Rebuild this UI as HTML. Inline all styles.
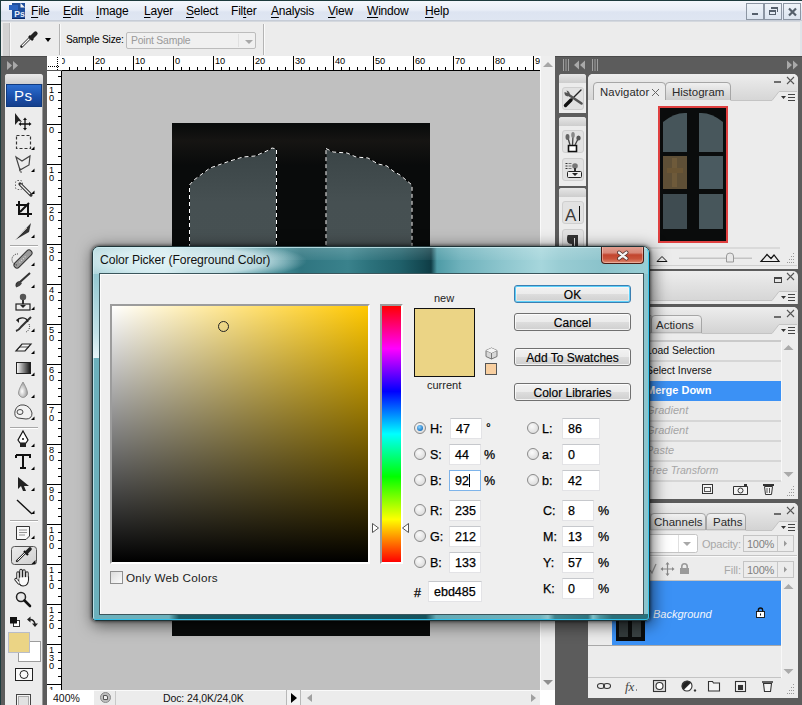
<!DOCTYPE html>
<html><head><meta charset="utf-8">
<style>
*{margin:0;padding:0;box-sizing:border-box}
html,body{width:802px;height:705px;overflow:hidden;background:#c0c0c0;font-family:"Liberation Sans",sans-serif;position:relative}
.a{position:absolute}
.t{position:absolute;white-space:nowrap;color:#000}
#menubar{left:1px;top:1px;width:801px;height:20px;background:linear-gradient(#f4f7fc 0%,#e9eef7 45%,#dde4f1 55%,#dfe6f2 100%)}
#menubar span{position:absolute;top:3px;font-size:12px;letter-spacing:-0.2px;color:#000}
#menubar u{text-decoration:underline;text-underline-offset:1.5px;text-decoration-thickness:1px}
.wc{position:absolute;top:2px;width:18px;height:17px;border:1px solid #8c96a3;background:linear-gradient(#eef3f9,#dce5f0)}
#opts{left:1px;top:21px;width:801px;height:35px;background:#ececec;border-top:1px solid #d4d8de}
.tri{position:absolute;width:0;height:0;border-left:4px solid transparent;border-right:4px solid transparent;border-top:4px solid #000}
.panel{position:absolute;background:#ececec;border-radius:5px 5px 0 0}
.sb{position:absolute;background:#ececec}
</style></head><body>
<div class="a" style="left:0;top:0;width:802px;height:705px;background:#c0c0c0"></div>
<!-- menubar -->
<div class="a" id="menubar">
<svg class="a" style="left:7px;top:1px" width="18" height="18" viewBox="0 0 18 18">
<rect x="4" y="1" width="13" height="16" fill="#1f4e9c"/><path d="M12.5 1 L17 5.5 L12.5 5.5Z" fill="#f4f4f4"/><rect x="1" y="3" width="9" height="5" fill="#2a63c0"/>
<rect x="4" y="16" width="13" height="1" fill="#0d2a66"/>
<text x="6.3" y="14.5" font-size="8.5" font-weight="bold" fill="#e8eef8" font-family="Liberation Sans">Ps</text>
</svg>
<span style="left:30px"><u>F</u>ile</span><span style="left:62px"><u>E</u>dit</span><span style="left:95px"><u>I</u>mage</span><span style="left:143px"><u>L</u>ayer</span><span style="left:185px"><u>S</u>elect</span><span style="left:230px">Fil<u>t</u>er</span><span style="left:270px"><u>A</u>nalysis</span><span style="left:327px"><u>V</u>iew</span><span style="left:366px"><u>W</u>indow</span><span style="left:424px"><u>H</u>elp</span>
<div class="wc" style="left:745px"><div class="a" style="left:5px;top:9px;width:6px;height:2px;background:#55606c"></div></div>
<div class="wc" style="left:763px"><div class="a" style="left:4px;top:6px;width:7px;height:5px;border:1.5px solid #55606c;border-top-width:2px"></div><div class="a" style="left:6px;top:3px;width:7px;height:5px;border:1px solid #55606c;border-top-width:2px;border-left:none;border-bottom:none"></div></div>
<div class="wc" style="left:782px"><svg class="a" style="left:3px;top:3px" width="11" height="10"><path d="M2 1.5 L9 8.5 M9 1.5 L2 8.5" stroke="#55606c" stroke-width="2.2"/></svg></div>
</div>
<div class="a" style="left:1px;top:20px;width:801px;height:1px;background:#c6ccd6"></div>
<!-- options bar -->
<div class="a" id="opts">
 <div class="a" style="left:1px;top:1px;width:8px;height:33px;background:#d2d2d2;border-left:1px solid #e6e6e6;border-right:1px solid #bdbdbd"></div>
 <div class="a" style="left:9px;top:1px;width:1px;height:33px;background:#f8f8f8"></div>
 <svg class="a" style="left:18px;top:8px" width="20" height="19" viewBox="0 0 20 19">
  <path d="M2.5 16.5 L11 8" stroke="#222" stroke-width="2.6" stroke-linecap="round"/>
  <path d="M3 16 L10.5 8.5" stroke="#fafafa" stroke-width="1.2"/>
  <path d="M10 6 L14 10" stroke="#111" stroke-width="2.5"/>
  <path d="M12.5 7.5 L16.5 3.5" stroke="#222" stroke-width="4.2" stroke-linecap="round"/>
 </svg>
 <div class="tri" style="left:44px;top:16px;border-width:4px 3.5px 0 3.5px"></div>
 <div class="a" style="left:58px;top:2px;width:1px;height:31px;background:#b4b4b4"></div>
 <div class="a" style="left:59px;top:2px;width:1px;height:31px;background:#fafafa"></div>
 <span class="t" style="left:65px;top:12px;font-size:10.2px;color:#000;letter-spacing:-0.2px">Sample Size:</span>
 <div class="a" style="left:125px;top:10px;width:130px;height:17px;border:1px solid #bcbcbc;background:#f0f0f0;border-radius:2px">
   <span class="t" style="left:4px;top:2px;font-size:10.4px;color:#9a9a9a;letter-spacing:-0.2px">Point Sample</span>
   <div class="a" style="left:111px;top:1px;width:1px;height:13px;background:#e0e0e0"></div>
   <div class="tri" style="left:118px;top:7px;border-width:4px 4px 0 4px;border-top-color:#a8a8a8"></div>
 </div>
 <div class="a" style="left:262px;top:2px;width:1px;height:31px;background:#b4b4b4"></div><div class="a" style="left:263px;top:2px;width:1px;height:31px;background:#fafafa"></div>
 <div class="a" style="left:0;top:34px;width:801px;height:1px;background:#bcbcbc"></div>
</div>
<div class="a" style="left:0;top:0;width:802px;height:1px;background:#1d3b3d"></div>
<div class="a" style="left:0;top:0;width:1px;height:705px;background:#1d3b3d"></div>
<div class="a" style="left:800px;top:21px;width:2px;height:35px;background:#dfe3e8"></div>
<!-- canvas -->
<div class="a" style="left:62px;top:70px;width:478px;height:620px;background:#c0c0c0"></div>
<div class="a" style="left:172px;top:123px;width:258px;height:513px;background:#090b0b;overflow:hidden">
 <div class="a" style="left:0;top:2px;width:258px;height:40px;background:linear-gradient(rgba(48,40,34,0),rgba(48,40,34,.33) 40%,rgba(48,40,34,0))"></div>
 <svg class="a" style="left:0;top:0" width="258" height="513" viewBox="172 123 258 513">
  <defs><linearGradient id="pg" x1="0" y1="0" x2="0" y2="1"><stop offset="0" stop-color="#3a4446"/><stop offset="0.12" stop-color="#465052"/><stop offset="1" stop-color="#4a5454"/></linearGradient></defs>
  <path d="M189.5 185 L194 180 L210 168 L230 161 L243 157 L255 156 L262 153 L269 150 L272 148 L276.5 149 L276.5 600 L189.5 600Z" fill="url(#pg)" stroke="#000" stroke-width="1"/><path d="M189.5 185 L194 180 L210 168 L230 161 L243 157 L255 156 L262 153 L269 150 L272 148 L276.5 149 L276.5 600 L189.5 600Z" fill="none" stroke="#fff" stroke-width="1" stroke-dasharray="4 3"/>
  <path d="M326 148.5 L333 152 L347 153 L356 157 L368 158 L378 164 L387 166 L393 171 L400 175 L412 185 L412 600 L326 600Z" fill="url(#pg)" stroke="#000" stroke-width="1"/><path d="M326 148.5 L333 152 L347 153 L356 157 L368 158 L378 164 L387 166 L393 171 L400 175 L412 185 L412 600 L326 600Z" fill="none" stroke="#fff" stroke-width="1" stroke-dasharray="4 3"/>
 </svg>
</div>
<svg class="a" style="left:47px;top:56px" width="493" height="15" viewBox="47 56 493 15"><rect x="47" y="56" width="493" height="15" fill="#fff"/><rect x="47" y="70" width="493" height="1" fill="#000"/><rect x="53" y="56" width="1" height="15" fill="#000"/><rect x="61" y="67" width="1" height="4" fill="#000"/><rect x="69" y="67" width="1" height="4" fill="#000"/><rect x="77" y="67" width="1" height="4" fill="#000"/><rect x="85" y="67" width="1" height="4" fill="#000"/><text x="55" y="64" font-size="9.2" font-family="Liberation Sans" fill="#000">30</text><rect x="93" y="56" width="1" height="15" fill="#000"/><rect x="101" y="67" width="1" height="4" fill="#000"/><rect x="109" y="67" width="1" height="4" fill="#000"/><rect x="117" y="67" width="1" height="4" fill="#000"/><rect x="125" y="67" width="1" height="4" fill="#000"/><text x="95" y="64" font-size="9.2" font-family="Liberation Sans" fill="#000">20</text><rect x="133" y="56" width="1" height="15" fill="#000"/><rect x="141" y="67" width="1" height="4" fill="#000"/><rect x="149" y="67" width="1" height="4" fill="#000"/><rect x="157" y="67" width="1" height="4" fill="#000"/><rect x="165" y="67" width="1" height="4" fill="#000"/><text x="135" y="64" font-size="9.2" font-family="Liberation Sans" fill="#000">10</text><rect x="173" y="56" width="1" height="15" fill="#000"/><rect x="181" y="67" width="1" height="4" fill="#000"/><rect x="189" y="67" width="1" height="4" fill="#000"/><rect x="197" y="67" width="1" height="4" fill="#000"/><rect x="205" y="67" width="1" height="4" fill="#000"/><text x="175" y="64" font-size="9.2" font-family="Liberation Sans" fill="#000">0</text><rect x="213" y="56" width="1" height="15" fill="#000"/><rect x="221" y="67" width="1" height="4" fill="#000"/><rect x="229" y="67" width="1" height="4" fill="#000"/><rect x="237" y="67" width="1" height="4" fill="#000"/><rect x="245" y="67" width="1" height="4" fill="#000"/><text x="215" y="64" font-size="9.2" font-family="Liberation Sans" fill="#000">10</text><rect x="253" y="56" width="1" height="15" fill="#000"/><rect x="261" y="67" width="1" height="4" fill="#000"/><rect x="269" y="67" width="1" height="4" fill="#000"/><rect x="277" y="67" width="1" height="4" fill="#000"/><rect x="285" y="67" width="1" height="4" fill="#000"/><text x="255" y="64" font-size="9.2" font-family="Liberation Sans" fill="#000">20</text><rect x="293" y="56" width="1" height="15" fill="#000"/><rect x="301" y="67" width="1" height="4" fill="#000"/><rect x="309" y="67" width="1" height="4" fill="#000"/><rect x="317" y="67" width="1" height="4" fill="#000"/><rect x="325" y="67" width="1" height="4" fill="#000"/><text x="295" y="64" font-size="9.2" font-family="Liberation Sans" fill="#000">30</text><rect x="333" y="56" width="1" height="15" fill="#000"/><rect x="341" y="67" width="1" height="4" fill="#000"/><rect x="349" y="67" width="1" height="4" fill="#000"/><rect x="357" y="67" width="1" height="4" fill="#000"/><rect x="365" y="67" width="1" height="4" fill="#000"/><text x="335" y="64" font-size="9.2" font-family="Liberation Sans" fill="#000">40</text><rect x="373" y="56" width="1" height="15" fill="#000"/><rect x="381" y="67" width="1" height="4" fill="#000"/><rect x="389" y="67" width="1" height="4" fill="#000"/><rect x="397" y="67" width="1" height="4" fill="#000"/><rect x="405" y="67" width="1" height="4" fill="#000"/><text x="375" y="64" font-size="9.2" font-family="Liberation Sans" fill="#000">50</text><rect x="413" y="56" width="1" height="15" fill="#000"/><rect x="421" y="67" width="1" height="4" fill="#000"/><rect x="429" y="67" width="1" height="4" fill="#000"/><rect x="437" y="67" width="1" height="4" fill="#000"/><rect x="445" y="67" width="1" height="4" fill="#000"/><text x="415" y="64" font-size="9.2" font-family="Liberation Sans" fill="#000">60</text><rect x="453" y="56" width="1" height="15" fill="#000"/><rect x="461" y="67" width="1" height="4" fill="#000"/><rect x="469" y="67" width="1" height="4" fill="#000"/><rect x="477" y="67" width="1" height="4" fill="#000"/><rect x="485" y="67" width="1" height="4" fill="#000"/><text x="455" y="64" font-size="9.2" font-family="Liberation Sans" fill="#000">70</text><rect x="493" y="56" width="1" height="15" fill="#000"/><rect x="501" y="67" width="1" height="4" fill="#000"/><rect x="509" y="67" width="1" height="4" fill="#000"/><rect x="517" y="67" width="1" height="4" fill="#000"/><rect x="525" y="67" width="1" height="4" fill="#000"/><text x="495" y="64" font-size="9.2" font-family="Liberation Sans" fill="#000">80</text><rect x="533" y="56" width="1" height="15" fill="#000"/><text x="535" y="64" font-size="9.2" font-family="Liberation Sans" fill="#000">90</text><rect x="47" y="56" width="15" height="15" fill="#fff"/><rect x="47" y="70" width="15" height="1" fill="#555"/><line x1="57.5" y1="57" x2="57.5" y2="70" stroke="#000" stroke-width="1" stroke-dasharray="1 1"/><line x1="48" y1="66.5" x2="60" y2="66.5" stroke="#000" stroke-width="1" stroke-dasharray="1 1"/></svg><svg class="a" style="left:47px;top:71px" width="15" height="619" viewBox="47 71 15 619"><rect x="47" y="71" width="15" height="619" fill="#fff"/><rect x="61" y="71" width="1" height="619" fill="#000"/><rect x="47" y="44" width="15" height="1" fill="#000"/><rect x="58" y="76" width="4" height="1" fill="#000"/><text x="49" y="52.5" font-size="9.2" font-family="Liberation Sans" fill="#000">2</text><text x="49" y="60.8" font-size="9.2" font-family="Liberation Sans" fill="#000">0</text><rect x="47" y="84" width="15" height="1" fill="#000"/><rect x="58" y="92" width="4" height="1" fill="#000"/><rect x="58" y="100" width="4" height="1" fill="#000"/><rect x="58" y="108" width="4" height="1" fill="#000"/><rect x="58" y="116" width="4" height="1" fill="#000"/><text x="49" y="92.5" font-size="9.2" font-family="Liberation Sans" fill="#000">1</text><text x="49" y="100.8" font-size="9.2" font-family="Liberation Sans" fill="#000">0</text><rect x="47" y="124" width="15" height="1" fill="#000"/><rect x="58" y="132" width="4" height="1" fill="#000"/><rect x="58" y="140" width="4" height="1" fill="#000"/><rect x="58" y="148" width="4" height="1" fill="#000"/><rect x="58" y="156" width="4" height="1" fill="#000"/><text x="49" y="132.5" font-size="9.2" font-family="Liberation Sans" fill="#000">0</text><rect x="47" y="164" width="15" height="1" fill="#000"/><rect x="58" y="172" width="4" height="1" fill="#000"/><rect x="58" y="180" width="4" height="1" fill="#000"/><rect x="58" y="188" width="4" height="1" fill="#000"/><rect x="58" y="196" width="4" height="1" fill="#000"/><text x="49" y="172.5" font-size="9.2" font-family="Liberation Sans" fill="#000">1</text><text x="49" y="180.8" font-size="9.2" font-family="Liberation Sans" fill="#000">0</text><rect x="47" y="204" width="15" height="1" fill="#000"/><rect x="58" y="212" width="4" height="1" fill="#000"/><rect x="58" y="220" width="4" height="1" fill="#000"/><rect x="58" y="228" width="4" height="1" fill="#000"/><rect x="58" y="236" width="4" height="1" fill="#000"/><text x="49" y="212.5" font-size="9.2" font-family="Liberation Sans" fill="#000">2</text><text x="49" y="220.8" font-size="9.2" font-family="Liberation Sans" fill="#000">0</text><rect x="47" y="244" width="15" height="1" fill="#000"/><rect x="58" y="252" width="4" height="1" fill="#000"/><rect x="58" y="260" width="4" height="1" fill="#000"/><rect x="58" y="268" width="4" height="1" fill="#000"/><rect x="58" y="276" width="4" height="1" fill="#000"/><text x="49" y="252.5" font-size="9.2" font-family="Liberation Sans" fill="#000">3</text><text x="49" y="260.8" font-size="9.2" font-family="Liberation Sans" fill="#000">0</text><rect x="47" y="284" width="15" height="1" fill="#000"/><rect x="58" y="292" width="4" height="1" fill="#000"/><rect x="58" y="300" width="4" height="1" fill="#000"/><rect x="58" y="308" width="4" height="1" fill="#000"/><rect x="58" y="316" width="4" height="1" fill="#000"/><text x="49" y="292.5" font-size="9.2" font-family="Liberation Sans" fill="#000">4</text><text x="49" y="300.8" font-size="9.2" font-family="Liberation Sans" fill="#000">0</text><rect x="47" y="324" width="15" height="1" fill="#000"/><rect x="58" y="332" width="4" height="1" fill="#000"/><rect x="58" y="340" width="4" height="1" fill="#000"/><rect x="58" y="348" width="4" height="1" fill="#000"/><rect x="58" y="356" width="4" height="1" fill="#000"/><text x="49" y="332.5" font-size="9.2" font-family="Liberation Sans" fill="#000">5</text><text x="49" y="340.8" font-size="9.2" font-family="Liberation Sans" fill="#000">0</text><rect x="47" y="364" width="15" height="1" fill="#000"/><rect x="58" y="372" width="4" height="1" fill="#000"/><rect x="58" y="380" width="4" height="1" fill="#000"/><rect x="58" y="388" width="4" height="1" fill="#000"/><rect x="58" y="396" width="4" height="1" fill="#000"/><text x="49" y="372.5" font-size="9.2" font-family="Liberation Sans" fill="#000">6</text><text x="49" y="380.8" font-size="9.2" font-family="Liberation Sans" fill="#000">0</text><rect x="47" y="404" width="15" height="1" fill="#000"/><rect x="58" y="412" width="4" height="1" fill="#000"/><rect x="58" y="420" width="4" height="1" fill="#000"/><rect x="58" y="428" width="4" height="1" fill="#000"/><rect x="58" y="436" width="4" height="1" fill="#000"/><text x="49" y="412.5" font-size="9.2" font-family="Liberation Sans" fill="#000">7</text><text x="49" y="420.8" font-size="9.2" font-family="Liberation Sans" fill="#000">0</text><rect x="47" y="444" width="15" height="1" fill="#000"/><rect x="58" y="452" width="4" height="1" fill="#000"/><rect x="58" y="460" width="4" height="1" fill="#000"/><rect x="58" y="468" width="4" height="1" fill="#000"/><rect x="58" y="476" width="4" height="1" fill="#000"/><text x="49" y="452.5" font-size="9.2" font-family="Liberation Sans" fill="#000">8</text><text x="49" y="460.8" font-size="9.2" font-family="Liberation Sans" fill="#000">0</text><rect x="47" y="484" width="15" height="1" fill="#000"/><rect x="58" y="492" width="4" height="1" fill="#000"/><rect x="58" y="500" width="4" height="1" fill="#000"/><rect x="58" y="508" width="4" height="1" fill="#000"/><rect x="58" y="516" width="4" height="1" fill="#000"/><text x="49" y="492.5" font-size="9.2" font-family="Liberation Sans" fill="#000">9</text><text x="49" y="500.8" font-size="9.2" font-family="Liberation Sans" fill="#000">0</text><rect x="47" y="524" width="15" height="1" fill="#000"/><rect x="58" y="532" width="4" height="1" fill="#000"/><rect x="58" y="540" width="4" height="1" fill="#000"/><rect x="58" y="548" width="4" height="1" fill="#000"/><rect x="58" y="556" width="4" height="1" fill="#000"/><text x="49" y="532.5" font-size="9.2" font-family="Liberation Sans" fill="#000">1</text><text x="49" y="540.8" font-size="9.2" font-family="Liberation Sans" fill="#000">0</text><text x="49" y="549.1" font-size="9.2" font-family="Liberation Sans" fill="#000">0</text><rect x="47" y="564" width="15" height="1" fill="#000"/><rect x="58" y="572" width="4" height="1" fill="#000"/><rect x="58" y="580" width="4" height="1" fill="#000"/><rect x="58" y="588" width="4" height="1" fill="#000"/><rect x="58" y="596" width="4" height="1" fill="#000"/><text x="49" y="572.5" font-size="9.2" font-family="Liberation Sans" fill="#000">1</text><text x="49" y="580.8" font-size="9.2" font-family="Liberation Sans" fill="#000">1</text><text x="49" y="589.1" font-size="9.2" font-family="Liberation Sans" fill="#000">0</text><rect x="47" y="604" width="15" height="1" fill="#000"/><rect x="58" y="612" width="4" height="1" fill="#000"/><rect x="58" y="620" width="4" height="1" fill="#000"/><rect x="58" y="628" width="4" height="1" fill="#000"/><rect x="58" y="636" width="4" height="1" fill="#000"/><text x="49" y="612.5" font-size="9.2" font-family="Liberation Sans" fill="#000">1</text><text x="49" y="620.8" font-size="9.2" font-family="Liberation Sans" fill="#000">2</text><text x="49" y="629.1" font-size="9.2" font-family="Liberation Sans" fill="#000">0</text><rect x="47" y="644" width="15" height="1" fill="#000"/><rect x="58" y="652" width="4" height="1" fill="#000"/><rect x="58" y="660" width="4" height="1" fill="#000"/><rect x="58" y="668" width="4" height="1" fill="#000"/><rect x="58" y="676" width="4" height="1" fill="#000"/><text x="49" y="652.5" font-size="9.2" font-family="Liberation Sans" fill="#000">1</text><text x="49" y="660.8" font-size="9.2" font-family="Liberation Sans" fill="#000">3</text><text x="49" y="669.1" font-size="9.2" font-family="Liberation Sans" fill="#000">0</text><rect x="47" y="684" width="15" height="1" fill="#000"/><text x="49" y="692.5" font-size="9.2" font-family="Liberation Sans" fill="#000">1</text><text x="49" y="700.8" font-size="9.2" font-family="Liberation Sans" fill="#000">4</text><text x="49" y="709.1" font-size="9.2" font-family="Liberation Sans" fill="#000">0</text></svg><!-- vscroll + status -->
<div class="a" style="left:540px;top:56px;width:15px;height:634px;background:#eeeeee;border-left:1px solid #fafafa"></div>
<div class="a" style="left:543px;top:62px;width:0;height:0;border-left:5px solid transparent;border-right:5px solid transparent;border-bottom:5px solid #a6a6a6"></div>
<div class="a" style="left:543px;top:680px;width:0;height:0;border-left:5px solid transparent;border-right:5px solid transparent;border-top:5px solid #8e8e8e"></div>
<div class="a" style="left:540px;top:690px;width:15px;height:15px;background:#fff"></div>
<div class="a" style="left:47px;top:690px;width:493px;height:15px;background:#ececec;border-top:1px solid #fafafa"></div>
<div class="a" style="left:47px;top:690px;width:47px;height:15px;background:#fff"></div>
<span class="t" style="left:53px;top:692px;font-size:10.5px;color:#111">400%</span>
<div class="a" style="left:94px;top:691px;width:22px;height:14px;background:#ebebeb;border-right:1px solid #c8c8c8"></div>
<div class="a" style="left:100px;top:692px;width:11px;height:11px;border-radius:50%;background:#bdbdbd;border:1px solid #8a8a8a"></div>
<div class="a" style="left:103px;top:695px;width:5px;height:5px;background:#f0f0f0;border:1px solid #555;border-radius:0 2px 0 0"></div>
<span class="t" style="left:163px;top:692px;font-size:10.5px;color:#111;letter-spacing:-0.1px">Doc: 24,0K/24,0K</span>
<div class="a" style="left:286px;top:690px;width:15px;height:15px;border-left:1px solid #b8b8b8;border-right:1px solid #b8b8b8;background:#f2f2f2"></div>
<div class="a" style="left:291px;top:693px;width:0;height:0;border-top:5px solid transparent;border-bottom:5px solid transparent;border-left:6px solid #000"></div>
<div class="a" style="left:307px;top:694px;width:0;height:0;border-top:4px solid transparent;border-bottom:4px solid transparent;border-right:5px solid #a0a0a0"></div>
<div class="a" style="left:531px;top:694px;width:0;height:0;border-top:4px solid transparent;border-bottom:4px solid transparent;border-left:5px solid #a0a0a0"></div>
<!-- toolbox -->
<div class="a" style="left:1px;top:56px;width:46px;height:649px;background:#5c5c5c"></div>
<div class="a" style="left:1px;top:56px;width:46px;height:1px;background:#4a4a4a"></div>
<svg class="a" style="left:7px;top:61px" width="12" height="9"><path d="M0 0 L5 4.5 L0 9Z M6 0 L11 4.5 L6 9Z" fill="#a9a9a9"/></svg>
<div class="a" style="left:5px;top:74px;width:38px;height:631px;background:#ececec;border-radius:3px 3px 0 0;border-right:1px solid #9a9a9a"></div>
<div class="a" style="left:5px;top:74px;width:38px;height:10px;background:linear-gradient(#e9e9e9,#cfcfcf);border-radius:3px 3px 0 0"></div>
<div class="a" style="left:6px;top:84px;width:36px;height:23px;background:linear-gradient(#2d6ed0,#1a4ea8 60%,#163f8c);border:1px solid #0f3a80"></div>
<span class="t" style="left:14px;top:87px;font-size:15px;color:#fff;font-weight:normal;letter-spacing:0.5px">Ps</span>
<svg class="a" style="left:5px;top:108px" width="38" height="600" viewBox="5 108 38 600">
 <g fill="#000" stroke="none">
  <!-- corner triangles --><path d="M34.5 146.5 L34.5 150 L31 150Z"/><path d="M34.5 168.5 L34.5 172 L31 172Z"/><path d="M34.5 190.5 L34.5 194 L31 194Z"/><path d="M34.5 234.5 L34.5 238 L31 238Z"/><path d="M34.5 262.5 L34.5 266 L31 266Z"/><path d="M34.5 284.5 L34.5 288 L31 288Z"/><path d="M34.5 306.5 L34.5 310 L31 310Z"/><path d="M34.5 328.5 L34.5 332 L31 332Z"/><path d="M34.5 350.5 L34.5 354 L31 354Z"/><path d="M34.5 372.5 L34.5 376 L31 376Z"/><path d="M34.5 394.5 L34.5 398 L31 398Z"/><path d="M34.5 416.5 L34.5 420 L31 420Z"/><path d="M34.5 443.5 L34.5 447 L31 447Z"/><path d="M34.5 466.5 L34.5 470 L31 470Z"/><path d="M34.5 487.5 L34.5 491 L31 491Z"/><path d="M34.5 510.5 L34.5 514 L31 514Z"/><path d="M34.5 535.5 L34.5 539 L31 539Z"/><path d="M34.5 559.5 L34.5 563 L31 563Z"/></g>
 <!-- move -->
 <path d="M15 113 L15 125 L18.5 121 L22 122Z" fill="#222"/>
 <path d="M25 119 L25 129 M20 124 L30 124" stroke="#111" stroke-width="1.3"/>
 <path d="M25 117.5 L23 120 L27 120Z M25 130.5 L23 128 L27 128Z M18.5 124 L21 122 L21 126Z M31.5 124 L29 122 L29 126Z" fill="#111"/>
 <!-- marquee -->
 <rect x="16.5" y="135.5" width="14" height="13" fill="none" stroke="#333" stroke-width="1.2" stroke-dasharray="3 2"/>
 <!-- lasso -->
 <path d="M16 157 L22 161 L30 156 L29 165 L20 170 Z" fill="none" stroke="#444" stroke-width="1.2"/>
 <path d="M20 168 Q19 173 22 172" fill="none" stroke="#444" stroke-width="1"/>
 <!-- quick select -->
 <rect x="15.5" y="180.5" width="7" height="9" rx="2" fill="none" stroke="#666" stroke-dasharray="1.5 1.5"/>
 <path d="M20 184 L31 195" stroke="#333" stroke-width="3.2" stroke-linecap="round"/><path d="M20.5 184.5 L30 194" stroke="#eee" stroke-width="1.2"/>
 <!-- crop -->
 <path d="M19 201 L19 214 L32 214 M16 205 L28 205 L28 217 M20 212 L29 203" fill="none" stroke="#111" stroke-width="2"/>
 <!-- slice -->
 <path d="M15 240 L31 223 L29 232 Z" fill="#333"/><path d="M15 240 L27 228" stroke="#ddd" stroke-width="0.8"/>
 <rect x="10" y="245" width="28" height="1" fill="#a8a8a8"/><rect x="10" y="246" width="28" height="1" fill="#fff"/>
 <!-- heal -->
 <path d="M17 265 L29 253" stroke="#333" stroke-width="7" stroke-linecap="round"/>
 <path d="M17 265 L29 253" stroke="#9a9a9a" stroke-width="5" stroke-linecap="round"/>
 <path d="M19.5 262.5 L26.5 255.5" stroke="#d8d8d8" stroke-width="1.2" stroke-dasharray="1 1.5"/>
 <path d="M18 254 A5 5 0 1 0 17 265" fill="none" stroke="#222" stroke-width="0.9" stroke-dasharray="1 1"/>
 <!-- brush -->
 <path d="M17 287 Q15 283 20 282 L30 273" stroke="#333" stroke-width="2" fill="none"/>
 <path d="M16 287 Q20 287 22 283 L19 281 Q17 283 16 287Z" fill="#444"/>
 <!-- stamp -->
 <circle cx="23" cy="297" r="3.2" fill="#555"/><rect x="22" y="300" width="2" height="4" fill="#333"/>
 <rect x="16" y="304" width="14" height="6" fill="#eee" stroke="#222" stroke-width="1.2"/><path d="M20 305 L26 305 L23 308Z" fill="#222"/>
 <!-- history brush -->
 <path d="M16 331 Q19 330 21 327 L31 317" stroke="#333" stroke-width="2" fill="none"/>
 <path d="M17 321 A6 6 0 0 1 28 322" fill="none" stroke="#222" stroke-width="1.2"/><path d="M16 320 L19 318 L19 323Z" fill="#222"/>
 <path d="M29 324 A6 6 0 0 1 26 332" fill="none" stroke="#222" stroke-dasharray="1 1"/>
 <!-- eraser -->
 <path d="M16 351 L22 344 L31 344 L25 351Z" fill="#f4f4f4" stroke="#222" stroke-width="1.2"/>
 <path d="M16 351 L20 347 L29 347" fill="none" stroke="#222" stroke-width="0.8"/>
 <!-- gradient -->
 <defs><linearGradient id="gr" x1="0" x2="1"><stop offset="0" stop-color="#fff"/><stop offset="1" stop-color="#111"/></linearGradient>
 <radialGradient id="dr" cx="0.4" cy="0.6" r="0.6"><stop offset="0" stop-color="#fff"/><stop offset="1" stop-color="#999"/></radialGradient></defs>
 <rect x="16.5" y="362.5" width="14" height="11" fill="url(#gr)" stroke="#222"/>
 <!-- blur drop -->
 <path d="M23 382 Q29 392 27 395 Q23 400 19 395 Q17 392 23 382Z" fill="url(#dr)" stroke="#888" stroke-width="0.8"/>
 <!-- dodge/smudge -->
 <path d="M15 411 Q17 404 24 405 Q30 406 32 413 Q32 419 26 419 L18 418 Q14 417 15 411Z" fill="#f2f2f2" stroke="#333" stroke-width="0.9"/>
 <ellipse cx="20" cy="412" rx="3" ry="2.5" fill="none" stroke="#333" stroke-width="0.9"/>
 <rect x="10" y="427" width="28" height="1" fill="#a8a8a8"/><rect x="10" y="428" width="28" height="1" fill="#fff"/>
 <!-- pen -->
 <path d="M23 431 L28 440 L26 443 L20 443 L18 440Z" fill="#fff" stroke="#111" stroke-width="1.2"/>
 <circle cx="23" cy="439" r="1" fill="#111"/><rect x="20" y="443" width="6" height="4" fill="#222"/>
 <!-- type -->
 <path d="M16 455 L30 455 L30 458 M16 455 L16 458 M23 455 L23 468 M20 468 L26 468" fill="none" stroke="#111" stroke-width="2"/>
 <!-- path select -->
 <path d="M18 477 L29 486 L24 486 L26 491 L23 491 L21 486 L18 489Z" fill="#222"/>
 <!-- line -->
 <path d="M17 500 L32 514" stroke="#111" stroke-width="1.4"/>
 <rect x="10" y="520" width="28" height="1" fill="#a8a8a8"/><rect x="10" y="521" width="28" height="1" fill="#fff"/>
 <!-- notes -->
 <path d="M16.5 526.5 L29.5 526.5 L29.5 536 L26 539.5 L16.5 539.5Z" fill="#f8f8f8" stroke="#333"/>
 <path d="M19 530 L27 530 M19 532.5 L27 532.5 M19 535 L25 535" stroke="#777" stroke-width="0.8"/>
 <!-- eyedropper selected -->
 <defs><linearGradient id="selg" x1="0" y1="0" x2="1" y2="1"><stop offset="0" stop-color="#ececec"/><stop offset="1" stop-color="#cfcfcf"/></linearGradient></defs><rect x="11.5" y="546.5" width="25" height="18" rx="3" fill="url(#selg)" stroke="#555"/><path d="M35.5 560 L35.5 564 L31.5 564Z" fill="#111"/>
 <path d="M17 561 L25 553" stroke="#222" stroke-width="2.4" stroke-linecap="round"/>
 <path d="M17.5 560.5 L25 553" stroke="#fafafa" stroke-width="1"/>
 <path d="M24 551 L28 555" stroke="#111" stroke-width="2.2"/><path d="M26.5 552.5 L30 549" stroke="#222" stroke-width="3.6" stroke-linecap="round"/>
 <!-- hand -->
 <g stroke-linecap="round">
 <path d="M18 579 V573 M21 578 V570.5 M24 578 V571 M27 579 V573 M16 579.5 L19 583" stroke="#222" stroke-width="3.4"/>
 <path d="M19 577 Q18 586 23 586 Q28 586 28.5 580 L28.5 577Z" fill="#fafafa" stroke="#222" stroke-width="1.1"/>
 <path d="M18 579 V573 M21 578 V570.5 M24 578 V571 M27 579 V573 M16 579.5 L19 583" stroke="#fafafa" stroke-width="1.5"/>
 <path d="M19.5 578 Q19 585 23 585 Q27.5 585 27.5 580 V577Z" fill="#fafafa"/>
 </g>
 <!-- zoom -->
 <circle cx="21" cy="597" r="4.5" fill="#e8e8e8" stroke="#222" stroke-width="1.5"/>
 <path d="M24.5 600.5 L30 606" stroke="#111" stroke-width="2.6" stroke-linecap="round"/>
 <!-- fg/bg small -->
 <rect x="13.5" y="620.5" width="6" height="6" fill="#fff" stroke="#333" stroke-width="1"/>
 <rect x="10" y="617" width="7" height="6.5" fill="#111"/>
 <path d="M29 619.5 Q34 619 35 624" fill="none" stroke="#222" stroke-width="1.5"/>
 <path d="M27 619.5 L30.5 616.5 L30.5 622.5Z M35 627 L32 623.5 L38 623.5Z" fill="#222"/>
 <!-- colors -->
 <rect x="18.5" y="641.5" width="22" height="20" fill="#fff" stroke="#9c9c9c"/>
 <rect x="8.5" y="632.5" width="21" height="20" fill="#ebd485" stroke="#b8bcc8"/>
 <!-- quick mask -->
 <rect x="15.5" y="668.5" width="17" height="12" fill="#fafafa" stroke="#222"/>
 <circle cx="24" cy="674.5" r="4" fill="#fafafa" stroke="#222"/>
 <!-- screen mode -->
 <rect x="16.5" y="694.5" width="14" height="12" fill="#f4f4f4" stroke="#444"/><rect x="18.5" y="696.5" width="10" height="10" fill="#e2e2e2" stroke="#aaa"/>
</svg>
<!-- dock -->
<div class="a" style="left:555px;top:56px;width:247px;height:649px;background:#5c5c5c"></div>
<div class="a" style="left:555px;top:56px;width:247px;height:1px;background:#4a4a4a"></div>
<svg class="a" style="left:555px;top:56px" width="245" height="18" viewBox="555 56 245 18">
 <path d="M563.5 59 V71 M566 59 V71 M568.5 59 V71" stroke="#a0a0a0" stroke-width="1"/>
 <path d="M574 65 L579 60.5 L579 69.5Z M580 65 L585 60.5 L585 69.5Z" fill="#a9a9a9"/>
 <path d="M592.5 59 V71 M595 59 V71 M597.5 59 V71" stroke="#a0a0a0" stroke-width="1"/>
 <path d="M787 60.5 L792 65 L787 69.5Z M793 60.5 L798 65 L793 69.5Z" fill="#a9a9a9"/>
</svg>
<!-- icon column -->
<div class="a" style="left:559px;top:74px;width:27px;height:39px;background:#ececec;border-radius:3px 3px 0 0"></div>
<div class="a" style="left:559px;top:74px;width:27px;height:9px;background:linear-gradient(#e6e6e6,#cdcdcd);border-radius:3px 3px 0 0"></div>
<div class="a" style="left:559px;top:117px;width:27px;height:69px;background:#ececec;border-radius:3px 3px 0 0"></div>
<div class="a" style="left:559px;top:117px;width:27px;height:9px;background:linear-gradient(#e6e6e6,#cdcdcd);border-radius:3px 3px 0 0"></div>
<div class="a" style="left:559px;top:188px;width:27px;height:90px;background:#ececec;border-radius:3px 3px 0 0"></div>
<div class="a" style="left:559px;top:188px;width:27px;height:9px;background:linear-gradient(#e6e6e6,#cdcdcd);border-radius:3px 3px 0 0"></div>
<div class="a" style="left:562px;top:87px;width:22px;height:23px;background:#e2e2e2;border:1px solid #cfcfcf;border-radius:3px"></div>
<div class="a" style="left:562px;top:130px;width:22px;height:23px;background:#e2e2e2;border:1px solid #cfcfcf;border-radius:3px"></div>
<div class="a" style="left:562px;top:158px;width:22px;height:23px;background:#e2e2e2;border:1px solid #cfcfcf;border-radius:3px"></div>
<div class="a" style="left:562px;top:201px;width:22px;height:23px;background:#e2e2e2;border:1px solid #cfcfcf;border-radius:3px"></div>
<div class="a" style="left:562px;top:229px;width:22px;height:23px;background:#e2e2e2;border:1px solid #cfcfcf;border-radius:3px"></div>
<svg class="a" style="left:559px;top:74px" width="27" height="200" viewBox="559 74 27 200">
 <path d="M571.5 99.5 L581 90" stroke="#222" stroke-width="1.4" stroke-linecap="round"/><path d="M565.5 105.5 L571 100" stroke="#111" stroke-width="3.4" stroke-linecap="round"/>
 <path d="M569 95 L581.5 103.5" stroke="#555" stroke-width="2.6" stroke-linecap="round"/>
 <path d="M564.5 92 Q564 96 568 96.5 L570 94.5 Q569.5 91 566.5 90.5 L567.5 93 Z" fill="#555"/>
 <path d="M568.5 145.5 L568.5 151.5 L576.5 151.5 L576.5 145.5Z" fill="#fff" stroke="#111" stroke-width="1.6"/>
 <path d="M570 145 L568 138 M572.5 145 L573 136 M575 145 L578 139" stroke="#444" stroke-width="1.3"/>
 <ellipse cx="567.5" cy="137" rx="2" ry="3" fill="#666"/><ellipse cx="573" cy="135" rx="1.8" ry="3" fill="#888"/><ellipse cx="578.5" cy="138" rx="2.2" ry="2.6" fill="#555"/>
 <path d="M565.5 163.5 h2 M565.5 166 h2 M565.5 168.5 h2" stroke="#333" stroke-width="1"/><path d="M568.5 163.5 h3 M568.5 166 h3 M568.5 168.5 h3" stroke="#777" stroke-width="1"/>
 <circle cx="575" cy="166" r="2.8" fill="#777"/><rect x="574" y="168" width="2" height="3" fill="#333"/>
 <rect x="567.5" y="171.5" width="14" height="6" rx="1" fill="#eee" stroke="#222"/><path d="M572 173 L578 173 L575 176Z" fill="#222"/>
 <text x="565" y="221" font-size="17" font-family="Liberation Sans" fill="#3a3a3a">A</text><rect x="579" y="206" width="1" height="15" fill="#111"/>
 <path d="M568 235 h10 v17 h-3 v-14 h-1 v14 h-2 v-8 q-5 0 -5 -4.5 q0 -4.5 1 -4.5z" fill="#333"/>
</svg>
<!-- navigator panel -->
<div class="panel" style="left:588px;top:74px;width:210px;height:195px"></div>
<div class="a" style="left:588px;top:74px;width:210px;height:26px;background:linear-gradient(#ededed,#d6d6d6);border-radius:5px 5px 0 0"></div>
<svg class="a" style="left:588px;top:74px" width="209" height="195" viewBox="588 74 209 195">
 <path d="M588 100 L594 100 L594 86 Q594 83 597 83 L662 83 Q665 83 665 86 L665 100 L797 100 L797 103 L588 103Z" fill="#ececec"/>
 <path d="M593.5 100 L593.5 86 Q593.5 82.5 597 82.5 L662 82.5 Q665.5 82.5 665.5 86 L665.5 100" fill="none" stroke="#a6a6a6"/>
 <path d="M666 100 L666 86 Q666 83 669 83 L727 83 Q730 83 730 86 L730 100Z" fill="url(#tabg)"/>
 <defs><linearGradient id="tabg" x1="0" y1="0" x2="0" y2="1"><stop offset="0" stop-color="#f0f0f0"/><stop offset="1" stop-color="#cdcdcd"/></linearGradient></defs>
 <path d="M665.5 100 L665.5 86 Q665.5 82.5 669 82.5 L727 82.5 Q730.5 82.5 730.5 86 L730.5 100" fill="none" stroke="#a6a6a6"/>
 <path d="M730.5 100.5 L772 100.5 L779 91.5 L797 91.5 L797 100.5Z" fill="#ececec"/>
 <path d="M730.5 100.5 L772 100.5 L779 91.5 L797 91.5" fill="none" stroke="#c4c4c4"/>
 <path d="M652 89 L659 96 M659 89 L652 96" stroke="#666" stroke-width="1"/>
 <path d="M774 82.0 h7" stroke="#444" stroke-width="1.5"/>
 <path d="M787 77.0 L794 84.0 M794 77.0 L787 84.0" stroke="#555" stroke-width="1.1"/>
 <path d="M781 96 L786 96 L783.5 99Z" fill="#333"/><path d="M788 94.5 h7 M788 97.5 h7 M788 100.5 h7" stroke="#444" stroke-width="1"/>
 <text x="600" y="96" font-size="11.3" font-family="Liberation Sans" fill="#2a2a2a" letter-spacing="0.1">Navigator</text>
 <text x="672" y="96" font-size="11.5" font-family="Liberation Sans" fill="#2a2a2a">Histogram</text>
 <!-- thumbnail -->
 <rect x="658" y="106" width="70" height="137" fill="#e04040"/>
 <rect x="660" y="108" width="66" height="133" fill="#0a0c0c"/>
 <path d="M663 152 L663 122 Q675 112 687 113 L687 152Z" fill="#46555a"/>
 <path d="M699 152 L699 113 Q711 112 723 122 L723 152Z" fill="#48575c"/>
 <rect x="663" y="156" width="24" height="33" fill="#5e4f36"/><rect x="672" y="158" width="5" height="29" fill="#6e5a3a"/><rect x="667" y="168" width="16" height="5" fill="#6a5534"/>
 <rect x="699" y="156" width="24" height="33" fill="#4a5a60"/>
 <rect x="663" y="194" width="24" height="35" fill="#3f4c51"/>
 <rect x="699" y="194" width="24" height="35" fill="#47565b"/>
 <rect x="600" y="247.5" width="180" height="1" fill="#c8c8c8"/>
 <path d="M657 261.5 L662 256.5 L667 261.5Z" fill="none" stroke="#111" stroke-width="1"/>
 <rect x="679" y="257.5" width="73" height="1.5" fill="#c4c4c4"/>
 <path d="M726.5 262 L726.5 256 Q726.5 253 730 253 Q733.5 253 733.5 256 L733.5 262Z" fill="#e8e8e8" stroke="#999"/>
 <path d="M761 261.5 L767 254.5 L771 258.5 L774 255 L779 261.5Z" fill="none" stroke="#111" stroke-width="1.2"/>
 <g fill="#999"><rect x="793" y="253" width="1" height="1"/><rect x="791" y="256" width="1" height="1"/><rect x="793" y="256" width="1" height="1"/><rect x="789" y="259" width="1" height="1"/><rect x="791" y="259" width="1" height="1"/><rect x="793" y="259" width="1" height="1"/><rect x="787" y="262" width="1" height="1"/><rect x="789" y="262" width="1" height="1"/><rect x="791" y="262" width="1" height="1"/><rect x="793" y="262" width="1" height="1"/></g>
 <rect x="588" y="265" width="209" height="1" fill="#d0d0d0"/>
</svg>
<!-- collapsed panel -->
<div class="panel" style="left:588px;top:271px;width:210px;height:33px;background:linear-gradient(#ededed,#d3d3d3)"></div>
<svg class="a" style="left:588px;top:271px" width="209" height="33" viewBox="588 271 209 33">
 <path d="M588 300.5 L772 300.5 L779 291.5 L797 291.5 L797 304 L588 304Z" fill="#ececec"/>
 <path d="M588 300.5 L772 300.5 L779 291.5 L797 291.5" fill="none" stroke="#c4c4c4"/>
 <rect x="774.5" y="277.5" width="7" height="5" fill="none" stroke="#444" stroke-width="1"/><rect x="774.5" y="277.5" width="7" height="1.5" fill="#444"/>
 <path d="M787 273.0 L794 280.0 M794 273.0 L787 280.0" stroke="#555" stroke-width="1.1"/>
 <path d="M781 296 L786 296 L783.5 299Z" fill="#333"/><path d="M788 294.5 h7 M788 297.5 h7 M788 300.5 h7" stroke="#444" stroke-width="1"/>
</svg>
<!-- actions panel -->
<div class="panel" style="left:588px;top:307px;width:210px;height:192px"></div>
<div class="a" style="left:588px;top:307px;width:210px;height:26px;background:linear-gradient(#ededed,#d3d3d3);border-radius:5px 5px 0 0"></div>
<svg class="a" style="left:588px;top:307px" width="209" height="192" viewBox="588 307 209 192">
 <defs><linearGradient id="tabg2" x1="0" y1="0" x2="0" y2="1"><stop offset="0" stop-color="#f2f2f2"/><stop offset="1" stop-color="#cfcfcf"/></linearGradient></defs>
 <path d="M593.5 333 L593.5 319 Q593.5 315.5 597 315.5 L651 315.5 L651 333Z" fill="#ececec" stroke="#a6a6a6"/>
 <path d="M651.5 333 L651.5 319 Q651.5 315.5 655 315.5 L698 315.5 Q701.5 315.5 701.5 319 L701.5 333Z" fill="url(#tabg2)" stroke="#a6a6a6"/>
 <text x="656" y="329" font-size="11.5" font-family="Liberation Sans" fill="#2a2a2a">Actions</text>
 <path d="M701.5 333.5 L772 333.5 L779 324.5 L797 324.5 L797 340 L588 340 L588 333.5Z" fill="#ececec"/>
 <path d="M701.5 333.5 L772 333.5 L779 324.5 L797 324.5" fill="none" stroke="#c4c4c4"/>
 <path d="M774 317.0 h7" stroke="#444" stroke-width="1.5"/>
 <path d="M787 310.0 L794 317.0 M794 310.0 L787 317.0" stroke="#555" stroke-width="1.1"/>
 <path d="M781 329 L786 329 L783.5 332Z" fill="#333"/><path d="M788 327.5 h7 M788 330.5 h7 M788 333.5 h7" stroke="#444" stroke-width="1"/>
 <rect x="588" y="340.5" width="193" height="1" fill="#a8a8a8"/>
 <rect x="588" y="360.5" width="193" height="1" fill="#c0c0c0"/>
 <rect x="588" y="381" width="193" height="20" fill="#3b91f5"/>
 <rect x="588" y="420.5" width="193" height="1" fill="#c0c0c0"/>
 <rect x="588" y="440.5" width="193" height="1" fill="#c0c0c0"/>
 <rect x="588" y="460.5" width="193" height="1" fill="#c0c0c0"/>
 <rect x="588" y="480.5" width="193" height="1" fill="#c0c0c0"/>
 <rect x="781" y="341" width="16" height="140" fill="#ececec"/><rect x="781" y="341" width="1" height="140" fill="#f8f8f8"/>
 <path d="M783.5 350 L788.5 345 L793.5 350Z" fill="#aaa"/><path d="M783.5 472 L788.5 477 L793.5 472Z" fill="#aaa"/>
 <g font-family="Liberation Sans" font-size="11">
 <text x="646" y="354" fill="#111" font-size="10.4">Load Selection</text>
 <text x="646" y="374" fill="#111" font-size="10.4">Select Inverse</text>
 <text x="646" y="394" fill="#fff" font-weight="bold">Merge Down</text>
 <text x="646" y="414" fill="#a6a6a6" font-style="italic">Gradient</text>
 <text x="646" y="434" fill="#a6a6a6" font-style="italic">Gradient</text>
 <text x="646" y="454" fill="#a6a6a6" font-style="italic">Paste</text>
 <text x="646" y="474" fill="#a6a6a6" font-style="italic" font-size="10.6">Free Transform</text>
 </g>
 <rect x="702.5" y="484.5" width="10" height="9" fill="#f4f4f4" stroke="#333"/><rect x="704.5" y="487.5" width="6" height="4" fill="none" stroke="#555"/>
 <path d="M733.5 486.5 h14 v8 h-14z" fill="#f4f4f4" stroke="#333"/><circle cx="740.5" cy="490.5" r="2.5" fill="none" stroke="#333"/><rect x="744" y="484" width="3" height="2" fill="#333"/>
 <path d="M764.5 486.5 h8 l-1 8 h-6z" fill="#f4f4f4" stroke="#333"/><rect x="763" y="484" width="11" height="2" fill="#333"/><path d="M767 488 v5 M769.5 488 v5" stroke="#333" stroke-width="0.8"/>
 <g fill="#999"><rect x="793" y="486" width="1" height="1"/><rect x="791" y="489" width="1" height="1"/><rect x="793" y="489" width="1" height="1"/><rect x="789" y="492" width="1" height="1"/><rect x="791" y="492" width="1" height="1"/><rect x="793" y="492" width="1" height="1"/><rect x="787" y="495" width="1" height="1"/><rect x="789" y="495" width="1" height="1"/><rect x="791" y="495" width="1" height="1"/><rect x="793" y="495" width="1" height="1"/></g>
</svg>
<!-- layers panel -->
<div class="panel" style="left:588px;top:503px;width:210px;height:195px"></div>
<div class="a" style="left:588px;top:503px;width:210px;height:27px;background:linear-gradient(#ededed,#d3d3d3);border-radius:5px 5px 0 0"></div>
<svg class="a" style="left:588px;top:503px" width="209" height="194" viewBox="588 503 209 194">
 <path d="M593.5 530 L593.5 517 Q593.5 513.5 597 513.5 L650 513.5 L650 530Z" fill="#ececec" stroke="#a6a6a6"/>
 <path d="M650.5 530 L650.5 517 Q650.5 513.5 654 513.5 L702 513.5 Q705.5 513.5 705.5 517 L705.5 530Z" fill="url(#tabg2)" stroke="#a6a6a6"/>
 <path d="M706.5 530 L706.5 517 Q706.5 513.5 710 513.5 L742 513.5 Q745.5 513.5 745.5 517 L745.5 530Z" fill="url(#tabg2)" stroke="#a6a6a6"/>
 <text x="654" y="526" font-size="11.5" font-family="Liberation Sans" fill="#2a2a2a">Channels</text>
 <text x="713" y="526" font-size="11.5" font-family="Liberation Sans" fill="#2a2a2a">Paths</text>
 <path d="M745.5 530.5 L772 530.5 L779 521.5 L797 521.5 L797 540 L588 540 L588 530.5Z" fill="#ececec"/>
 <path d="M745.5 530.5 L772 530.5 L779 521.5 L797 521.5" fill="none" stroke="#c4c4c4"/>
 <path d="M774 514.0 h7" stroke="#444" stroke-width="1.5"/>
 <path d="M787 507.0 L794 514.0 M794 507.0 L787 514.0" stroke="#555" stroke-width="1.1"/>
 <path d="M781 526 L786 526 L783.5 529Z" fill="#333"/><path d="M788 524.5 h7 M788 527.5 h7 M788 530.5 h7" stroke="#444" stroke-width="1"/>
 <rect x="600.5" y="534.5" width="97" height="18" rx="2" fill="#fff" stroke="#c4c4c4"/>
 <rect x="678" y="535" width="1" height="17" fill="#e0e0e0"/>
 <path d="M683 542 L691 542 L687 546Z" fill="#a8a8a8"/>
 <text x="702" y="548" font-size="11" font-family="Liberation Sans" fill="#a8a8a8" letter-spacing="-0.2">Opacity:</text>
 <rect x="743.5" y="535.5" width="50" height="16" fill="#ececec" stroke="#c4c4c4"/><rect x="777" y="536" width="1" height="15" fill="#c8c8c8"/>
 <text x="747" y="548" font-size="11" font-family="Liberation Sans" fill="#808080" letter-spacing="-0.3">100%</text>
 <path d="M784 540.5 L787 543.5 L784 546.5Z" fill="#999"/>
 <rect x="588" y="555" width="209" height="1" fill="#c4c4c4"/><rect x="588" y="556" width="209" height="1" fill="#fafafa"/>
 <path d="M650 570 L652 573 L656 564" stroke="#999" stroke-width="1.3" fill="none"/>
 <path d="M662 569 h11 M667.5 563.5 v11" stroke="#888" stroke-width="1.2"/><path d="M667.5 562 l-2 2.5 h4z M667.5 576 l-2 -2.5 h4z M660.5 569 l2.5 -2 v4z M674.5 569 l-2.5 -2 v4z" fill="#888"/>
 <rect x="680" y="568" width="9" height="6" fill="#9a9a9a"/><path d="M681.8 568 v-1.5 a2.7 2.7 0 0 1 5.4 0 v1.5" fill="none" stroke="#9a9a9a" stroke-width="1.6"/>
 <text x="724" y="574" font-size="11" font-family="Liberation Sans" fill="#a8a8a8">Fill:</text>
 <rect x="743.5" y="561.5" width="50" height="16" fill="#ececec" stroke="#c4c4c4"/><rect x="777" y="562" width="1" height="15" fill="#c8c8c8"/>
 <text x="747" y="574" font-size="11" font-family="Liberation Sans" fill="#808080" letter-spacing="-0.3">100%</text>
 <path d="M784 566.5 L787 569.5 L784 572.5Z" fill="#999"/>
 <rect x="588" y="580" width="193" height="1" fill="#c4c4c4"/>
 <rect x="612" y="581" width="169" height="64" fill="#3b91f5"/>
 <rect x="588" y="645" width="193" height="1" fill="#a8a8a8"/>
 <rect x="616" y="611" width="29" height="30" fill="#0b0d0d"/>
 <rect x="619" y="617" width="9" height="20" fill="#333b3c"/><rect x="632" y="617" width="9" height="20" fill="#3a4344"/>
 <text x="653" y="618" font-size="11" font-style="italic" font-family="Liberation Sans" fill="#f2f6fc">Background</text>
 <rect x="756.5" y="611.5" width="8" height="6" fill="#fff" stroke="#111" stroke-width="0.9"/><path d="M758.3 611.5 v-1.3 a2.2 2.2 0 0 1 4.4 0 v1.3" fill="none" stroke="#111" stroke-width="1.3"/><rect x="760" y="613.5" width="1" height="2" fill="#111"/>
 <rect x="781" y="581" width="16" height="97" fill="#ececec"/><rect x="781" y="581" width="1" height="97" fill="#f8f8f8"/>
 <path d="M783.5 589 L788.5 584 L793.5 589Z" fill="#aaa"/><path d="M783.5 669 L788.5 674 L793.5 669Z" fill="#aaa"/>
 <rect x="588" y="677" width="193" height="1" fill="#c4c4c4"/>
 <g stroke="#333" fill="none" stroke-width="1.1">
  <ellipse cx="601" cy="686" rx="3.5" ry="2.5"/><ellipse cx="607" cy="686" rx="3.5" ry="2.5"/>
  <rect x="653.5" y="680.5" width="12" height="11" fill="#ddd"/><circle cx="659.5" cy="686" r="3.5" fill="#fff"/>
  <circle cx="687" cy="686" r="5" fill="#fff"/><path d="M683.5 689.5 A5 5 0 0 1 690.5 682.5Z" fill="#222"/>
  <path d="M708.5 681.5 h4 l1 1.5 h6 v8 h-11z" fill="#f4f4f4"/>
  <rect x="735.5" y="681.5" width="10" height="10" fill="#f4f4f4"/><rect x="738.5" y="685.5" width="4" height="4" fill="#333"/>
  <path d="M763.5 683.5 h8 l-1 8 h-6z" fill="#f4f4f4"/><path d="M762 682 h11" stroke-width="1.5"/>
 </g>
 <text x="625" y="691" font-size="13" font-style="italic" font-family="Liberation Serif" fill="#444">fx</text>
 <path d="M636 690 h1 M694 690 l2 0 l-1 1.5z" stroke="#333" stroke-width="1"/>
 <g fill="#999"><rect x="793" y="684" width="1" height="1"/><rect x="791" y="687" width="1" height="1"/><rect x="793" y="687" width="1" height="1"/><rect x="789" y="690" width="1" height="1"/><rect x="791" y="690" width="1" height="1"/><rect x="793" y="690" width="1" height="1"/><rect x="787" y="693" width="1" height="1"/><rect x="789" y="693" width="1" height="1"/><rect x="791" y="693" width="1" height="1"/><rect x="793" y="693" width="1" height="1"/></g>
</svg>
<!-- dialog -->
<div class="a" style="left:92px;top:246px;width:558px;height:375px;border-radius:7px 7px 4px 4px;box-shadow:2px 3px 15px 2px rgba(0,0,0,.52), 0 0 3px 1px rgba(0,0,0,.45)"></div>
<div class="a" id="dlg" style="left:92px;top:246px;width:558px;height:375px;border-radius:7px 7px 4px 4px;overflow:hidden;border:1px solid #1e3438;
 background:linear-gradient(90deg,#6cb1bc 0px,#6cb1bc 78px,#1a5a64 92px,#15525c 332px,#64aab5 344px,#6fb3be 446px,#9fd0d7 470px,#4b8f99 476px,#3f838d 492px,#8cc5cd 500px,#8cc5cd 558px)">
 <!-- title glass -->
 <div class="a" style="left:0;top:0;width:558px;height:27px;background:linear-gradient(90deg,#b0d6dc 0px,#b8dce1 72px,#6aa9b2 95px,#4a929c 150px,#3f8791 191px,#2f7580 208px,#3a828c 255px,#2c727c 277px,#1f5f69 308px,#134750 330px,#0f3c45 338px,#4e9ba6 344px,#6fb2bc 368px,#8cc5cd 408px,#a6d6dc 448px,#98ccd3 468px,#8bc3cb 508px,#9acfd6 558px)"></div>
 <div class="a" style="left:-25px;top:-6px;width:240px;height:40px;border-radius:50%;background:radial-gradient(ellipse at center,rgba(232,246,248,.92) 0%,rgba(222,241,245,.75) 45%,rgba(200,230,236,0) 70%)"></div>
 <div class="a" style="left:0;top:0;width:558px;height:13px;background:linear-gradient(rgba(255,255,255,.18),rgba(255,255,255,.05))"></div>
 <div class="a" style="left:0;top:367px;width:556px;height:6px;background:linear-gradient(90deg,#6cb1bc 0px,#6cb1bc 76px,#1a5a64 86px,#15525c 333px,#64aab5 343px,#6fb3be 447px,#8cc5cd 455px,#3f838d 462px,#2e747e 495px,#7fc0c8 500px,#4a929c 507px,#2a707a 519px,#2a707a 556px)"></div>
 <div class="a" style="left:0;top:0;width:556px;height:373px;border-radius:6px 6px 3px 3px;border:1px solid rgba(210,240,245,.75);border-bottom-color:#2fc0ea;border-right-color:#3ac6ee"></div>
 <div class="a" style="left:0;top:27px;width:6px;height:84px;background:linear-gradient(rgba(175,215,222,.6),rgba(215,238,242,.8) 70%,rgba(240,250,252,.92))"></div>
 <span class="t" style="left:7px;top:6px;font-size:12.2px;color:#111;letter-spacing:-0.1px">Color Picker (Foreground Color)</span>
 <div class="a" style="left:508px;top:-1px;width:43px;height:18px;border:1px solid #4a1c14;border-top:none;border-radius:0 0 4px 4px;background:linear-gradient(#e3a294 0%,#d88777 40%,#c2452e 52%,#c9533a 75%,#dd8a70 100%);box-shadow:inset 0 0 0 1px rgba(255,220,210,.45)"></div>
 <svg class="a" style="left:522px;top:2px" width="16" height="13"><path d="M4 3.5 L11.5 9.5 M11.5 3.5 L4 9.5" stroke="#4a2a24" stroke-width="3.8" stroke-linecap="round"/><path d="M4 3.5 L11.5 9.5 M11.5 3.5 L4 9.5" stroke="#f4f4f4" stroke-width="2.3" stroke-linecap="round"/></svg>
 <!-- client -->
 <div class="a" style="left:6px;top:26px;width:545px;height:342px;background:#efefef;border:1px solid #3b565c;box-shadow:inset 1px 1px 0 #fcfcfc"></div>
</div>
<div class="a" id="cli" style="left:99px;top:273px;width:544px;height:341px">
 <!-- color field -->
 <div class="a" style="left:11px;top:31px;width:260px;height:260px;border-top:2px solid #9c9c9c;border-left:2px solid #9c9c9c;border-right:2px solid #fff;border-bottom:2px solid #fff;overflow:hidden">
  <div class="a" style="left:0;top:0;width:256px;height:256px;background:linear-gradient(90deg,#fff,#ffc800)"></div>
  <div class="a" style="left:0;top:0;width:256px;height:256px;background:linear-gradient(rgba(0,0,0,0),#000)"></div>
  <div class="a" style="left:106px;top:15px;width:11px;height:11px;border-radius:50%;border:1px solid #222"></div>
 </div>
 <!-- hue bar -->
 <div class="a" style="left:281px;top:31px;width:23px;height:260px;border-top:2px solid #9c9c9c;border-left:2px solid #9c9c9c;border-right:2px solid #fff;border-bottom:2px solid #fff;background:linear-gradient(#f00 0%,#f0f 16.67%,#00f 33.33%,#0ff 50%,#0f0 66.67%,#ff0 83.33%,#f00 100%)"></div>
 <svg class="a" style="left:272px;top:248px" width="40" height="14" viewBox="0 0 40 14">
  <path d="M1.5 2.5 L7.5 7 L1.5 11.5Z" fill="#fff" stroke="#555" stroke-width="1"/>
  <path d="M37.5 2.5 L31.5 7 L37.5 11.5Z" fill="#fff" stroke="#555" stroke-width="1"/>
 </svg>
 <!-- swatch -->
 <span class="t" style="left:335px;top:19px;font-size:11px;color:#222">new</span>
 <div class="a" style="left:315px;top:35px;width:61px;height:69px;border:1px solid #111;background:#ebd485"></div>
 <span class="t" style="left:328px;top:106px;font-size:11px;color:#222">current</span>
 <svg class="a" style="left:386px;top:74px" width="13" height="13" viewBox="0 0 13 13"><path d="M6.5 1 L12 3.5 L12 9.5 L6.5 12 L1 9.5 L1 3.5Z" fill="#d8d8d8" stroke="#777"/><path d="M1 3.5 L6.5 6 L12 3.5 M6.5 6 V12" fill="none" stroke="#777"/><path d="M6.5 1 L12 3.5 L6.5 6 L1 3.5Z" fill="#f4f4f4"/></svg>
 <div class="a" style="left:386px;top:90px;width:12px;height:12px;border:1px solid #555;background:#f8cfa0"></div>
 <!-- buttons -->
 <div class="a btn" style="left:415px;top:12px;width:117px;height:18px;border:1px solid #3c7fb1;box-shadow:inset 0 0 0 1px #5cd0fa, inset 0 0 0 2px rgba(255,255,255,.4)"><span>OK</span></div>
 <div class="a btn" style="left:415px;top:40px;width:117px;height:18px"><span>Cancel</span></div>
 <div class="a btn" style="left:415px;top:75px;width:117px;height:18px"><span>Add To Swatches</span></div>
 <div class="a btn" style="left:415px;top:110px;width:117px;height:18px"><span>Color Libraries</span></div>
 <!-- fields -->
 <div class="rad on" style="left:315px;top:149px"></div>
<span class="lbl" style="left:331px;top:149px">H:</span>
<div class="box" style="left:351px;top:145px;width:32px;height:21px"><span>47</span></div>
<span class="lbl" style="left:387px;top:148px;font-size:12px">°</span>
<div class="rad" style="left:315px;top:175px"></div>
<span class="lbl" style="left:331px;top:175px">S:</span>
<div class="box" style="left:350px;top:171px;width:32px;height:21px"><span>44</span></div>
<span class="lbl" style="left:385px;top:175px">%</span>
<div class="rad" style="left:315px;top:201px"></div>
<span class="lbl" style="left:331px;top:201px">B:</span>
<div class="box" style="left:350px;top:197px;width:32px;height:21px;border-color:#7eb4ea"><span>92</span></div>
<span class="lbl" style="left:385px;top:201px">%</span>
<div class="rad" style="left:315px;top:231px"></div>
<span class="lbl" style="left:331px;top:231px">R:</span>
<div class="box" style="left:350px;top:227px;width:32px;height:21px"><span>235</span></div>
<div class="rad" style="left:315px;top:257px"></div>
<span class="lbl" style="left:331px;top:257px">G:</span>
<div class="box" style="left:350px;top:253px;width:32px;height:21px"><span>212</span></div>
<div class="rad" style="left:315px;top:283px"></div>
<span class="lbl" style="left:331px;top:283px">B:</span>
<div class="box" style="left:350px;top:279px;width:32px;height:21px"><span>133</span></div>
<div class="rad" style="left:428px;top:149px"></div>
<span class="lbl" style="left:443px;top:149px">L:</span>
<div class="box" style="left:463px;top:145px;width:38px;height:21px"><span>86</span></div>
<div class="rad" style="left:428px;top:175px"></div>
<span class="lbl" style="left:443px;top:175px">a:</span>
<div class="box" style="left:463px;top:171px;width:38px;height:21px"><span>0</span></div>
<div class="rad" style="left:428px;top:201px"></div>
<span class="lbl" style="left:443px;top:201px">b:</span>
<div class="box" style="left:463px;top:197px;width:38px;height:21px"><span>42</span></div>
<span class="lbl" style="left:444px;top:231px">C:</span>
<div class="box" style="left:463px;top:227px;width:32px;height:21px"><span>8</span></div>
<span class="lbl" style="left:499px;top:231px">%</span>
<span class="lbl" style="left:444px;top:257px">M:</span>
<div class="box" style="left:463px;top:253px;width:32px;height:21px"><span>13</span></div>
<span class="lbl" style="left:499px;top:257px">%</span>
<span class="lbl" style="left:444px;top:283px">Y:</span>
<div class="box" style="left:463px;top:279px;width:32px;height:21px"><span>57</span></div>
<span class="lbl" style="left:499px;top:283px">%</span>
<span class="lbl" style="left:444px;top:309px">K:</span>
<div class="box" style="left:463px;top:305px;width:32px;height:21px"><span>0</span></div>
<span class="lbl" style="left:499px;top:309px">%</span>
<span class="lbl" style="left:315px;top:313px">#</span>
<div class="box" style="left:329px;top:308px;width:54px;height:21px"><span>ebd485</span></div>
<div class="a" style="left:370px;top:201px;width:1px;height:13px;background:#000"></div>
<div class="a" style="left:11px;top:298px;width:13px;height:13px;border:1px solid #8f8f8f;background:linear-gradient(135deg,#dcdcdc,#fbfbfb)"></div>
<span class="lbl" style="left:27px;top:298px;-webkit-text-stroke-width:0px;letter-spacing:0.25px;font-size:11.7px;color:#1a1a1a">Only Web Colors</span>
</div>
<style>
.btn{border:1px solid #707070;border-radius:3px;background:linear-gradient(#f2f2f2 0%,#ebebeb 50%,#dddddd 51%,#cfcfcf 100%);box-shadow:inset 0 0 0 1px rgba(255,255,255,.75)}
.btn span{position:absolute;left:0;right:0;top:2px;text-align:center;font-size:12px;color:#000;white-space:nowrap;-webkit-text-stroke:0.15px #000}
.rad{position:absolute;width:12px;height:12px;border-radius:50%;border:1px solid #8a8a8a;background:radial-gradient(circle at 40% 35%,#fafafa,#d4d4d4)}
.rad.on::after{content:"";position:absolute;left:2px;top:2px;width:6px;height:6px;border-radius:50%;background:radial-gradient(circle at 40% 35%,#8fd6ff,#1f78c6 70%,#0d4f8a)}
.lbl{position:absolute;font-size:12.5px;color:#000;white-space:nowrap;-webkit-text-stroke:0.25px #000}
.box{position:absolute;background:#fff;border:1px solid #e3e3e6;border-top-color:#c6c8cc}
.box span{position:absolute;left:5px;top:3px;font-size:12.5px;color:#000;white-space:nowrap;-webkit-text-stroke:0.25px #000}
</style>
</body></html>
